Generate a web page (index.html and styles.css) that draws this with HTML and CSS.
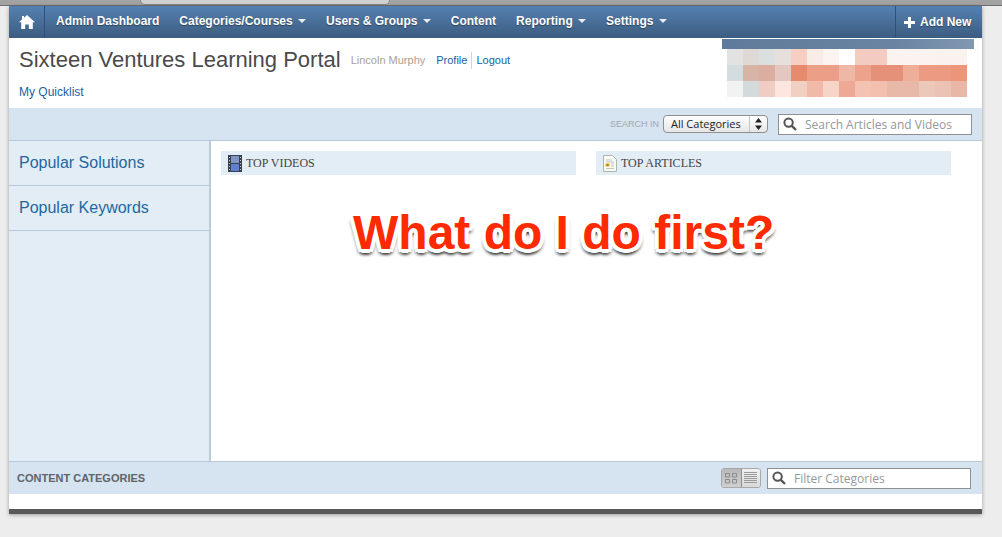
FILE: index.html
```html
<!DOCTYPE html>
<html lang="en">
  <head>
    <meta charset="UTF-8" />
    <title>Sixteen Ventures Learning Portal</title>
    <link rel="stylesheet" href="styles.css">
  </head>
  <body>
    <div class="chrome-top">
      <div class="chrome-tab"></div>
    </div>

    <div class="page">
      <div class="navbar">
        <a class="nav-home">
          <svg width="16" height="14" viewBox="0 0 16 14">
            <path d="M8 0 L16 7.2 L13.8 7.2 L13.8 14 L9.8 14 L9.8 9.4 L6.2 9.4 L6.2 14 L2.2 14 L2.2 7.2 L0 7.2 L3 4.5 L3 1 L5 1 L5 2.7 Z" fill="#fff" />
          </svg>
        </a>
        <ul class="nav-menu">
          <li>Admin Dashboard</li>
          <li>Categories/Courses <span class="caret"></span></li>
          <li>Users &amp; Groups <span class="caret"></span></li>
          <li>Content</li>
          <li>Reporting <span class="caret"></span></li>
          <li>Settings <span class="caret"></span></li>
        </ul>
        <a class="nav-add">
          <svg width="11" height="11" viewBox="0 0 11 11">
            <path d="M4 0 H7 V4 H11 V7 H7 V11 H4 V7 H0 V4 H4 Z" fill="#fff" />
          </svg>
          Add New
        </a>
      </div>

      <div class="masthead">
        <div class="masthead-left">
          <div class="title-row">
            <h1>Sixteen Ventures Learning Portal</h1>
            <span class="user-name">Lincoln Murphy</span>
            <a class="user-link first">Profile</a>
            <a class="user-link">Logout</a>
          </div>
          <a class="quicklist">My Quicklist</a>
        </div>
        <div class="mosaic">
          <div class="mosaic-bar"></div>
          <div class="mosaic-grid">
            <i style="background:#e2e2e2"></i><i style="background:#dfd9d6"></i><i style="background:#dadfdf"></i><i style="background:#e7dfdb"></i><i style="background:#f6cfc2"></i><i style="background:#f9ece7"></i><i style="background:#fcf4f0"></i><i style="background:#fff"></i><i style="background:#f3cbc0"></i><i style="background:#f3cbc0"></i><i style="background:#fbf3ef"></i><i style="background:#fbf3ef"></i><i style="background:#fbf3ef"></i><i style="background:#f9f2ee"></i><i style="background:#f9f2ee"></i>
            <i style="background:#d3dcdf"></i><i style="background:#d8b4a6"></i><i style="background:#dcaea0"></i><i style="background:#e2c8c0"></i><i style="background:#e68c6c"></i><i style="background:#ec9f87"></i><i style="background:#eb9f88"></i><i style="background:#efb7a6"></i><i style="background:#eca28b"></i><i style="background:#e5917a"></i><i style="background:#e5917a"></i><i style="background:#efae98"></i><i style="background:#ec9b82"></i><i style="background:#ec9b82"></i><i style="background:#ec9578"></i>
            <i style="background:#f2f2f2"></i><i style="background:#d3dadb"></i><i style="background:#efcdc4"></i><i style="background:#fce6df"></i><i style="background:#f2cfc3"></i><i style="background:#f1b9a8"></i><i style="background:#f6d4c8"></i><i style="background:#eda995"></i><i style="background:#f3c2b3"></i><i style="background:#f3bfae"></i><i style="background:#e8b8a8"></i><i style="background:#e8b8a8"></i><i style="background:#ecc8bb"></i><i style="background:#ecc2b5"></i><i style="background:#e8b7a6"></i>
          </div>
        </div>
      </div>

      <div class="search-bar">
        <span class="search-label">SEARCH IN</span>
        <div class="select-box">
          <span class="select-text">All Categories</span>
          <span class="select-arrows">
            <svg width="7" height="12" viewBox="0 0 7 12">
              <path d="M3.5 0 L7 4.5 H0 Z M3.5 12 L0 7.5 H7 Z" fill="#222" />
            </svg>
          </span>
        </div>
        <div class="search-input search-top">
          <svg class="search-icon" width="14" height="14" viewBox="0 0 14 14">
            <circle cx="5.6" cy="5.6" r="4.2" fill="none" stroke="#555" stroke-width="2" />
            <path d="M8.8 8.8 L13 13" stroke="#555" stroke-width="2.4" />
          </svg>
          <span class="placeholder">Search Articles and Videos</span>
        </div>
      </div>

      <div class="main">
        <div class="sidebar">
          <div class="side-item">Popular Solutions</div>
          <div class="side-item">Popular Keywords</div>
        </div>
        <div class="content">
          <div class="panels">
            <div class="panel-head">
              <svg width="14" height="17" viewBox="0 0 14 17">
                <rect width="14" height="17" fill="#3a3f50" />
                <rect x="3" y="1" width="8" height="7" fill="#7f96c4" />
                <rect x="3" y="9" width="8" height="7" fill="#5f7fd0" />
                <path d="M1 2h1v1H1zM1 5h1v1H1zM1 8h1v1H1zM1 11h1v1H1zM1 14h1v1H1zM12 2h1v1h-1zM12 5h1v1h-1zM12 8h1v1h-1zM12 11h1v1h-1zM12 14h1v1h-1z" fill="#c8ccd4" />
              </svg>
              TOP VIDEOS
            </div>
            <div class="panel-head">
              <svg width="14" height="17" viewBox="0 0 14 17">
                <path d="M0.5 0.5 H9.5 L13.5 4.5 V16.5 H0.5 Z" fill="#fafaf4" stroke="#a9b5ad" />
                <path d="M3 5h6M3 7h8M8 9h3M8 11h3M3 13.500h8" stroke="#c0c8c4" />
                <rect x="2.500" y="8.500" width="4" height="3" fill="#e6b422" />
                <rect x="3.500" y="9.500" width="2" height="1" fill="#7a4a10" />
              </svg>
              TOP ARTICLES
            </div>
          </div>
          <div class="callout">What do I do first?</div>
        </div>
      </div>

      <div class="cat-bar">
        <span class="cat-title">CONTENT CATEGORIES</span>
        <div class="view-toggle">
          <span class="view-btn active">
            <svg width="12" height="11" viewBox="0 0 12 11">
              <path d="M0.500 0.500h4v3.500h-4zM7.500 0.500h4v3.500h-4zM0.500 6.500h4v3.500h-4zM7.500 6.500h4v3.500h-4z" fill="none" stroke="#8a8a8a" />
            </svg>
          </span>
          <span class="view-btn">
            <svg width="13" height="12" viewBox="0 0 13 12">
              <path d="M0 0.500h13M0 2.500h13M0 4.500h13M0 6.500h13M0 8.500h13M0 10.500h13" stroke="#9a9a9a" />
            </svg>
          </span>
        </div>
        <div class="search-input search-filter">
          <svg class="search-icon" width="14" height="14" viewBox="0 0 14 14">
            <circle cx="5.6" cy="5.6" r="4.2" fill="none" stroke="#555" stroke-width="2" />
            <path d="M8.8 8.8 L13 13" stroke="#555" stroke-width="2.4" />
          </svg>
          <span class="placeholder">Filter Categories</span>
        </div>
      </div>

      <div class="page-foot"></div>
    </div>
  </body>
</html>
```

FILE: styles.css
```css
body {
  margin: 0;
  width: 1002px;
  height: 537px;
  overflow: hidden;
  background: #ededed;
  font-family: 'Liberation Sans', Arial, sans-serif;
}

.chrome-top {
  height: 6px;
  background: #a3a3a3;
  border-bottom: 1px solid #6f6f6f;
  box-sizing: border-box;
}

.chrome-tab {
  width: 250px;
  height: 5px;
  margin-left: 140px;
  background: #d0d0d0;
  border: 1px solid #8a8a8a;
  border-top: none;
  border-radius: 0 0 5px 5px;
  box-sizing: border-box;
}

.page {
  width: 973px;
  margin-left: 9px;
  background: white;
  box-shadow: 0 1px 4px rgba(0, 0, 0, 0.35);
}

/* Nav */
.navbar {
  display: flex;
  height: 32px;
  background: linear-gradient(#5581b0, #3c5c80);
  color: white;
  font-size: 12px;
  font-weight: bold;
}

.nav-home {
  width: 36px;
  border-right: 1px solid #2b4f80;
  box-sizing: border-box;
  display: flex;
  align-items: center;
  justify-content: center;
}

.nav-menu {
  flex: 1;
  display: flex;
  gap: 20px;
  list-style: none;
  margin: 0;
  padding: 0 0 0 11px;
  line-height: 31px;
  white-space: nowrap;
  text-shadow: 0 1px 1px rgba(0, 0, 0, 0.4);
}

.caret {
  display: inline-block;
  width: 0;
  height: 0;
  margin-left: 2px;
  vertical-align: 2px;
  border-left: 4px solid transparent;
  border-right: 4px solid transparent;
  border-top: 4px solid #e8edf3;
}

.nav-add {
  width: 87px;
  border-left: 1px solid #2b4f80;
  box-sizing: border-box;
  display: flex;
  align-items: center;
  gap: 5px;
  padding-left: 8px;
  text-shadow: 0 1px 1px rgba(0, 0, 0, 0.4);
}

/* Header */
.masthead {
  display: flex;
  justify-content: space-between;
  height: 70px;
  background: white;
}

.masthead-left {
  padding: 9px 0 0 10px;
}

.title-row {
  display: flex;
  align-items: center;
  height: 26px;
}

.title-row h1 {
  margin: 0 10px 0 0;
  font-size: 22px;
  font-weight: normal;
  color: #4a4a4a;
}

.user-name {
  font-size: 11px;
  color: #ab9f8f;
  margin-right: 11px;
}

.user-link {
  font-size: 11px;
  color: #1a5f9f;
  padding: 2px 4px 3px 0;
}

.user-link.first {
  border-right: 1px solid #d5d5d5;
  margin-right: 4px;
}

.quicklist {
  display: block;
  margin-top: 12px;
  font-size: 12px;
  color: #1a5f9f;
}

.mosaic {
  width: 252px;
  margin: 1px 8px 0 0;
}

.mosaic-bar {
  height: 10px;
  background: linear-gradient(to right, #5f7b9b, #6a84a2 70%, #8098b2);
}

.mosaic-grid {
  display: grid;
  grid-template-columns: repeat(15, 16px);
  grid-auto-rows: 16px;
  padding-left: 5px;
}

/* Search strip */
.search-bar {
  display: flex;
  align-items: center;
  height: 33px;
  box-sizing: border-box;
  background: #d6e3f0;
  border-bottom: 1px solid #b8c8d8;
}

.search-label {
  margin-left: auto;
  margin-right: 4px;
  font-size: 9px;
  color: #a0a8b2;
}

.select-box {
  display: flex;
  width: 105px;
  height: 18px;
  box-sizing: border-box;
  border: 1px solid #8f8f8f;
  border-radius: 4px;
  background: linear-gradient(#fff, #e6e6e6);
  font-family: 'Open Sans', sans-serif;
  font-size: 11px;
  color: #222;
  overflow: hidden;
}

.select-text {
  flex: 1;
  padding-left: 7px;
  line-height: 16px;
  white-space: nowrap;
}

.select-arrows {
  width: 17px;
  border-left: 1px solid #c4c4c4;
  display: flex;
  align-items: center;
  justify-content: center;
}

.search-input {
  display: flex;
  align-items: center;
  height: 21px;
  box-sizing: border-box;
  background: white;
  border: 1px solid #909090;
  overflow: hidden;
  white-space: nowrap;
  font-family: 'Open Sans', sans-serif;
  font-size: 12px;
}

.search-top {
  width: 194px;
  margin-left: 10px;
  margin-right: 10px;
}

.search-icon {
  flex: none;
  margin: 0 8px 0 4px;
}

.placeholder {
  color: #95989c;
}

/* Main area */
.main {
  display: flex;
  height: 320px;
}

.sidebar {
  width: 200px;
  background: #e3edf6;
  border-right: 2px solid #bccad6;
  box-sizing: content-box;
}

.side-item {
  height: 44px;
  border-bottom: 1px solid #b8c8d8;
  padding-left: 10px;
  font-size: 16px;
  line-height: 43px;
  color: #22689f;
}

.content {
  flex: 1;
  position: relative;
  padding: 10px 0 0 10px;
}

.panels {
  display: flex;
  gap: 20px;
}

.panel-head {
  display: flex;
  align-items: center;
  gap: 4px;
  width: 355px;
  height: 24px;
  box-sizing: border-box;
  padding-left: 7px;
  background: #e3edf6;
  font-family: 'Liberation Serif', serif;
  font-size: 12px;
  color: #444;
}

.callout {
  position: absolute;
  left: 142px;
  top: 64px;
  font-size: 48px;
  font-weight: bold;
  color: #ff2a00;
  white-space: nowrap;
  -webkit-text-stroke: 0;
  text-shadow:
    4px 0 0 #fff, -4px 0 0 #fff, 0 4px 0 #fff, 0 -4px 0 #fff,
    3px 3px 0 #fff, -3px 3px 0 #fff, 3px -3px 0 #fff, -3px -3px 0 #fff,
    0 6px 3px rgba(0, 0, 0, 0.55), 3px 5px 3px rgba(0, 0, 0, 0.4), -3px 5px 3px rgba(0, 0, 0, 0.4);
}

/* Bottom bar */
.cat-bar {
  display: flex;
  align-items: center;
  height: 33px;
  box-sizing: border-box;
  background: #d6e3f0;
  border-top: 1px solid #b8c8d8;
  padding: 0 11px 0 8px;
}

.cat-title {
  flex: 1;
  font-size: 11px;
  font-weight: bold;
  color: #5f6468;
}

.view-toggle {
  display: flex;
  width: 40px;
  height: 20px;
  box-sizing: border-box;
  border: 1px solid #a8a8a8;
  border-radius: 3px;
  overflow: hidden;
  margin-right: 6px;
}

.view-btn {
  flex: 1;
  display: flex;
  align-items: center;
  justify-content: center;
  background: linear-gradient(#f2f2f2, #d8d8d8);
}

.view-btn.active {
  background: linear-gradient(#b8b8b8, #d0d0d0);
  border-right: 1px solid #8f8f8f;
}

.search-filter {
  width: 204px;
}

.page-foot {
  height: 15px;
  background: white;
  border-bottom: 5px solid #585858;
}
```
